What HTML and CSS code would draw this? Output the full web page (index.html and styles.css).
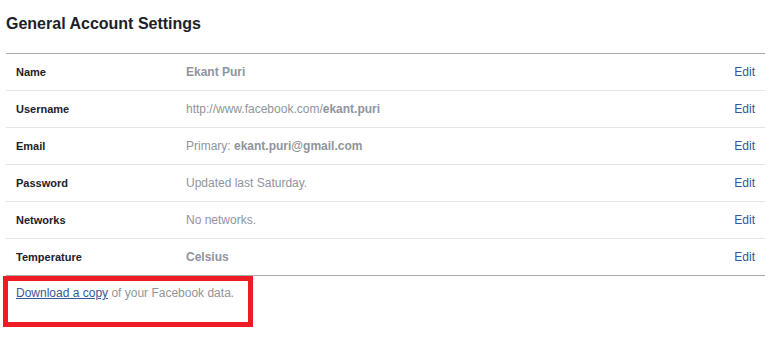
FILE: index.html
```html
<!DOCTYPE html>
<html>
<head>
<meta charset="utf-8">
<link rel="stylesheet" href="styles.css">
</head>
<body>
<div class="page">
  <h2 class="title">General Account Settings</h2>
  <div class="settings">
    <div class="row"><div class="label">Name</div><div class="value"><b>Ekant Puri</b></div><a class="edit" href="#">Edit</a></div>
    <div class="row"><div class="label">Username</div><div class="value">http://www.facebook.com/<b>ekant.puri</b></div><a class="edit" href="#">Edit</a></div>
    <div class="row"><div class="label">Email</div><div class="value">Primary: <b>ekant.puri@gmail.com</b></div><a class="edit" href="#">Edit</a></div>
    <div class="row"><div class="label">Password</div><div class="value">Updated last Saturday.</div><a class="edit" href="#">Edit</a></div>
    <div class="row"><div class="label">Networks</div><div class="value">No networks.</div><a class="edit" href="#">Edit</a></div>
    <div class="row last"><div class="label">Temperature</div><div class="value"><b>Celsius</b></div><a class="edit" href="#">Edit</a></div>
  </div>
  <div class="footer"><a class="dl" href="#">Download a copy</a> of your Facebook data.</div>
</div>
</body>
</html>
```
FILE: styles.css
```css
html, body {
  margin: 0;
  padding: 0;
  background: #fff;
}
body {
  font-family: "Liberation Sans", Arial, sans-serif;
}
.page {
  width: 759px;
  padding: 14px 0 0 6px;
}
.title {
  margin: 0 0 19px 0;
  font-size: 16px;
  line-height: 20px;
  font-weight: bold;
  color: #1d2129;
}
.settings {
  border-top: 1px solid #aaaaaa;
}
.row {
  display: flex;
  align-items: center;
  height: 36px;
  padding: 0 10px;
  border-bottom: 1px solid #e5e5e5;
}
.row.last {
  border-bottom-color: #aaaaaa;
}
.label {
  width: 170px;
  flex: none;
  font-size: 11px;
  font-weight: bold;
  color: #1d2129;
}
.value {
  flex: 1;
  font-size: 12px;
  color: #90949c;
}
.edit {
  font-size: 12px;
  color: #365899;
  text-decoration: none;
}
.footer {
  margin-left: -3px;
  width: 232px;
  height: 37px;
  border: 5px solid #ed1c24;
  padding: 4px 0 0 8px;
  font-size: 12px;
  line-height: 16px;
  color: #90949c;
}
.dl {
  color: #365899;
  text-decoration: underline;
}
```
